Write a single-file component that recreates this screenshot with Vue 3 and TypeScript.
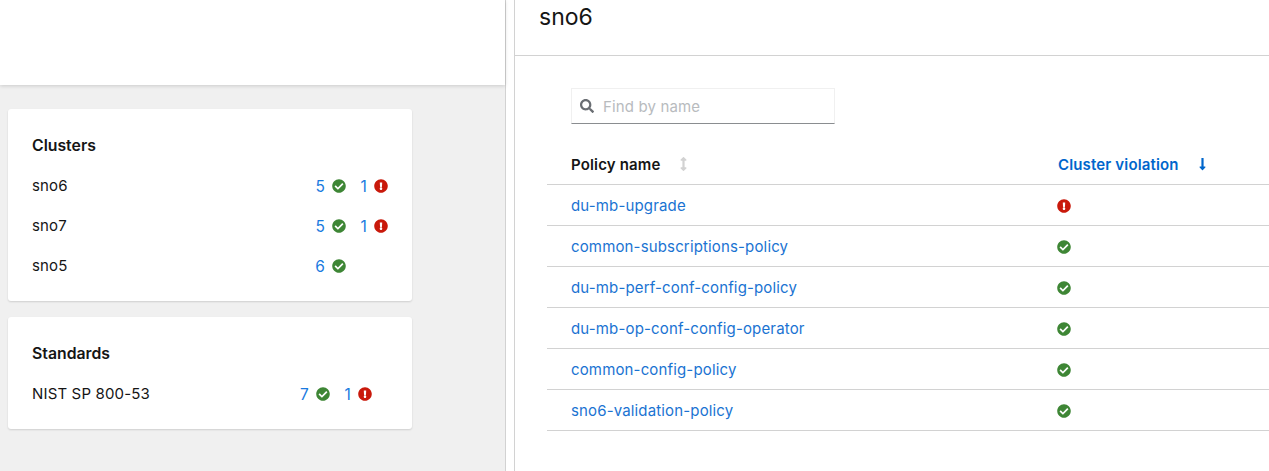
<script setup lang="ts">
const checkPath = 'M504 256c0 136.967-111.033 248-248 248S8 392.967 8 256 119.033 8 256 8s248 111.033 248 248zM227.314 387.314l184-184c6.248-6.248 6.248-16.379 0-22.627l-22.627-22.627c-6.248-6.249-16.379-6.249-22.628 0L216 308.118l-70.059-70.059c-6.248-6.248-16.379-6.248-22.628 0l-22.627 22.627c-6.248 6.248-6.248 16.379 0 22.627l104 104c6.249 6.249 16.379 6.249 22.628.001z'
const errorPath = 'M504 256c0 136.997-111.043 248-248 248S8 392.997 8 256C8 119.083 119.043 8 256 8s248 111.083 248 248zm-248 50c-25.405 0-46 20.595-46 46s20.595 46 46 46 46-20.595 46-46-20.595-46-46-46zm-43.673-165.346l7.418 136c.347 6.364 5.609 11.346 11.982 11.346h48.546c6.373 0 11.635-4.982 11.982-11.346l7.418-136c.375-6.874-5.098-12.654-11.982-12.654h-63.383c-6.884 0-12.356 5.78-11.981 12.654z'

interface Row { name: string; ok: number; bad: number }
const clusters: Row[] = [
  { name: 'sno6', ok: 5, bad: 1 },
  { name: 'sno7', ok: 5, bad: 1 },
  { name: 'sno5', ok: 6, bad: 0 },
]
const standards: Row[] = [{ name: 'NIST SP 800-53', ok: 7, bad: 1 }]
const cards = [
  { title: 'Clusters', rows: clusters, cls: '' },
  { title: 'Standards', rows: standards, cls: 'inset' },
]
const policies = [
  { name: 'du-mb-upgrade', bad: true },
  { name: 'common-subscriptions-policy', bad: false },
  { name: 'du-mb-perf-conf-config-policy', bad: false },
  { name: 'du-mb-op-conf-config-operator', bad: false },
  { name: 'common-config-policy', bad: false },
  { name: 'sno6-validation-policy', bad: false },
]
</script>

<template>
  <div class="page">
    <section class="left">
      <div class="masthead"></div>
      <div class="cards">
        <article v-for="card in cards" :key="card.title" class="card" :class="card.cls">
          <h2>{{ card.title }}</h2>
          <div v-for="row in card.rows" :key="row.name" class="row">
            <span class="row-name">{{ row.name }}</span>
            <span class="stats">
              <span class="stat">
                <a class="count">{{ row.ok }}</a>
                <svg class="icon green" viewBox="0 0 512 512"><path :d="checkPath" /></svg>
              </span>
              <span class="stat">
                <template v-if="row.bad">
                  <a class="count">{{ row.bad }}</a>
                  <svg class="icon red" viewBox="0 0 512 512"><path :d="errorPath" /></svg>
                </template>
              </span>
            </span>
          </div>
        </article>
      </div>
    </section>
    <section class="right">
      <header class="title"><h1>sno6</h1></header>
      <div class="content">
        <div class="toolbar">
          <label class="search">
            <svg class="search-icon" viewBox="0 0 512 512"><path d="M505 442.7L405.3 343c-4.5-4.5-10.6-7-17-7H372c27.6-35.3 44-79.7 44-128C416 93.1 322.9 0 208 0S0 93.1 0 208s93.1 208 208 208c48.3 0 92.7-16.4 128-44v16.3c0 6.4 2.5 12.5 7 17l99.7 99.7c9.4 9.4 24.6 9.4 33.9 0l28.3-28.3c9.4-9.4 9.4-24.6.1-34zM208 336c-70.7 0-128-57.2-128-128 0-70.7 57.2-128 128-128 70.7 0 128 57.2 128 128 0 70.7-57.2 128-128 128z" /></svg>
            <input type="text" placeholder="Find by name" />
          </label>
        </div>
        <div class="table">
          <div class="thead">
            <span class="col-name th">Policy name
              <svg class="sort muted" viewBox="0 0 256 512"><path d="M214.059 377.941H168V134.059h46.059c21.382 0 32.09-25.851 16.971-40.971L144.971 7.029c-9.373-9.373-24.568-9.373-33.941 0L24.971 93.088c-15.119 15.119-4.411 40.971 16.971 40.971H88v243.882H41.941c-21.382 0-32.09 25.851-16.971 40.971l86.059 86.059c9.373 9.373 24.568 9.373 33.941 0l86.059-86.059c15.12-15.119 4.412-40.971-16.97-40.971z" /></svg>
            </span>
            <span class="col-status th active">Cluster violation
              <svg class="sort" viewBox="0 0 256 512"><path d="M168 345.941V44c0-6.627-5.373-12-12-12h-56c-6.627 0-12 5.373-12 12v301.941H41.941c-21.382 0-32.09 25.851-16.971 40.971l86.059 86.059c9.373 9.373 24.569 9.373 33.941 0l86.059-86.059c15.119-15.119 4.411-40.971-16.971-40.971H168z" /></svg>
            </span>
          </div>
          <div v-for="p in policies" :key="p.name" class="tr">
            <a class="col-name">{{ p.name }}</a>
            <span class="col-status">
              <svg class="icon" :class="p.bad ? 'red' : 'green'" viewBox="0 0 512 512"><path :d="p.bad ? errorPath : checkPath" /></svg>
            </span>
          </div>
        </div>
      </div>
    </section>
  </div>
</template>

<style>
html, body { margin: 0; background: #fff; overflow: hidden; }
</style>

<style scoped>
.page {
  display: flex;
  width: 1269px;
  height: 471px;
  overflow: hidden;
  font-family: "Inter", "Liberation Sans", sans-serif;
  font-size: 15px;
  letter-spacing: 0.15px;
  color: #151515;
  background: #fff;
}
.left {
  width: 505px;
  flex: none;
  background: #f0f0f0;
  border-right: 1px solid #d2d2d2;
}
.masthead {
  height: 85px;
  background: #fff;
  box-shadow: 0 1px 4px rgba(3, 3, 3, 0.16);
}
.cards {
  display: flex;
  flex-direction: column;
  gap: 16px;
  width: 404px;
  margin: 24px 0 0 8px;
}
.card {
  background: #fff;
  border-radius: 3px;
  box-shadow: 0 1px 2px rgba(3, 3, 3, 0.14);
  padding: 24px 24px 15px;
}
.inset .row { padding-right: 16px; }
h2 {
  margin: 0 0 9px;
  height: 24px;
  line-height: 25px;
  font-size: 15.8px;
  font-weight: 600;
  letter-spacing: 0;
}
.row {
  display: flex;
  justify-content: space-between;
  align-items: center;
  height: 40px;
}
.row-name { line-height: 18px; margin-top: -1px; }
.stats { display: flex; }
.stat {
  display: flex;
  align-items: center;
  justify-content: flex-end;
  gap: 7px;
  width: 42px;
}
.count { color: #1a7ae0; font-size: 15.5px; }
.icon { width: 14px; height: 14px; flex: none; fill: currentColor; display: block; }
.green { color: #3e8635; }
.red { color: #c9190b; }
.right {
  flex: 1;
  min-width: 0;
  margin-left: 8px;
  border-left: 1px solid #d2d2d2;
}
.title {
  height: 55px;
  border-bottom: 1px solid #d2d2d2;
  padding-left: 24px;
}
h1 {
  margin: 0;
  font-size: 23px;
  font-weight: 400;
  line-height: 35px;
  letter-spacing: 0;
}
.content { padding: 32px 0 0 32px; }
.toolbar { padding-left: 24px; }
.search {
  display: flex;
  align-items: center;
  box-sizing: border-box;
  width: 264px;
  height: 36px;
  border: 1px solid #f0f0f0;
  border-bottom-color: #8a8d90;
  padding-left: 8px;
  gap: 9px;
}
.search-icon { width: 14px; height: 14px; fill: #6a6e73; flex: none; }
input {
  border: 0;
  outline: 0;
  padding: 0;
  flex: 1;
  min-width: 0;
  font: inherit;
  letter-spacing: inherit;
  background: transparent;
}
input::placeholder { color: #b8bbbe; opacity: 1; }
.thead, .tr {
  display: flex;
  align-items: center;
  border-bottom: 1px solid #d2d2d2;
  box-sizing: border-box;
  height: 41px;
  padding-left: 24px;
}
.thead { margin-top: 20px; }
.col-name { width: 486px; flex: none; }
.tr .col-name { color: #1a73d2; }
.tr .icon { margin-top: 1px; }
.col-status { display: flex; align-items: center; }
.th { font-weight: 600; display: flex; align-items: center; }
.active { color: #06c; padding-left: 1px; }
.sort { height: 14px; width: 7px; fill: currentColor; margin-left: 20px; }
.muted { fill: #d2d2d2; }
</style>
